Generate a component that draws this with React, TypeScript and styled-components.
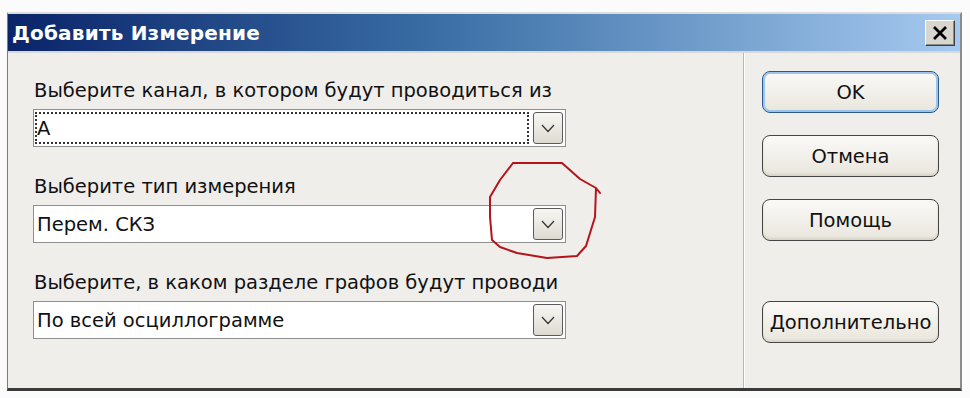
import React from "react";
import styled, {createGlobalStyle} from "styled-components";

const GlobalStyle = createGlobalStyle`
    html, body {
        margin: 0;
        padding: 0;
        background: #fbfbfb;
        font-family: "DejaVu Sans", "Liberation Sans", sans-serif;
    }
`;

const Page = styled.div`
    width: 970px;
    height: 398px;
    padding: 12px 8px 0 7px;
    box-sizing: border-box;
`;

const Window = styled.div`
    position: relative;
    width: 955px;
    height: 379px;
    box-sizing: border-box;
    display: flex;
    flex-direction: column;
    background: #efeeea;
    border-top: 2px solid #dcdcdc;
    border-left: 1px solid #7a7a7a;
    border-right: 2px solid #8a8a8a;
    border-bottom: 3px solid #3a3a3a;
`;

const TitleBar = styled.div`
    height: 37px;
    display: flex;
    align-items: center;
    justify-content: space-between;
    padding: 0 5px 0 4px;
    background: linear-gradient(to right, #0a246a 0%, #3a6ea5 45%, #a6caf0 100%);
    border-bottom: 2px solid #d8d8d8;
`;

const Title = styled.span`
    color: #ffffff;
    font-weight: bold;
    font-size: 20px;
    letter-spacing: 0.2px;
`;

const CloseButton = styled.div`
    width: 30px;
    height: 26px;
    box-sizing: border-box;
    display: flex;
    align-items: center;
    justify-content: center;
    background: #d9d6cf;
    border: 1px solid;
    border-color: #ffffff #404040 #404040 #ffffff;
    box-shadow: inset -1px -1px 0 #888;
`;

const Body = styled.div`
    flex: 1;
    display: flex;
`;

const LeftPane = styled.div`
    width: 735px;
    padding: 26px 0 0 25px;
    box-sizing: border-box;
    display: flex;
    flex-direction: column;
`;

const Field = styled.div`
    display: flex;
    flex-direction: column;
    margin-bottom: 28px;
`;

const Label = styled.div`
    font-size: 19.5px;
    line-height: 24px;
    height: 24px;
    color: #111;
    padding-left: 1px;
    margin-bottom: 6px;
    white-space: nowrap;
`;

const Combo = styled.div`
    width: 533px;
    height: 38px;
    box-sizing: border-box;
    display: flex;
    align-items: center;
    gap: 4px;
    padding: 2px 2px 2px 1px;
    background: #ffffff;
    border: 1px solid #8f8f8f;
`;

const ComboText = styled.div<{ $focused?: boolean }>`
    flex: 1;
    align-self: stretch;
    display: flex;
    align-items: center;
    font-size: 19.5px;
    color: #111;
    border: 2px dotted ${p => (p.$focused ? "#333" : "transparent")};
`;

const DropButton = styled.div`
    width: 30px;
    height: 32px;
    box-sizing: border-box;
    display: flex;
    align-items: center;
    justify-content: center;
    border: 1px solid #5a5a5a;
    border-radius: 3px;
    background: linear-gradient(to bottom, #f7f6f2, #dedbd2);
`;

const RightPane = styled.div`
    flex: 1;
    border-left: 1px solid #b8b8b8;
    box-shadow: inset 1px 0 0 #fff;
    padding: 18px 0 0 18px;
    display: flex;
    flex-direction: column;
    gap: 22px;
`;

const Button = styled.div<{ $default?: boolean; $spaced?: boolean }>`
    width: 177px;
    height: 42px;
    box-sizing: border-box;
    display: flex;
    align-items: center;
    justify-content: center;
    font-size: 19.5px;
    color: #111;
    border-radius: 8px;
    border: 1px solid ${p => (p.$default ? "#2c5a8a" : "#444")};
    background: linear-gradient(to bottom, #fbfaf7, #e9e6dd);
    box-shadow: ${p => (p.$default ? "inset 0 0 0 2px #9cc4ec" : "inset 0 -2px 2px #d8d4c8")};
    margin-top: ${p => (p.$spaced ? "38px" : "0")};
`;

// annotation drawn over the dialog; viewBox kept in page coordinates
const Marker = styled.svg`
    position: absolute;
    left: 467px;
    top: 131px;
    pointer-events: none;
`;

const Chevron = () => (
    <svg width="14" height="9" viewBox="0 0 14 9">
        <path d="M1 1 L7 7.5 L13 1" fill="none" stroke="#333" strokeWidth="1.2"/>
    </svg>
);

const CloseIcon = () => (
    <svg width="16" height="14" viewBox="0 0 16 14">
        <path d="M2 1 L14 13 M14 1 L2 13" stroke="#000" strokeWidth="2.8"/>
    </svg>
);

const fields = [
    {label: "Выберите канал, в котором будут проводиться из", value: "А", focused: true},
    {label: "Выберите тип измерения", value: "Перем. СКЗ"},
    {label: "Выберите, в каком разделе графов будут проводи", value: "По всей осциллограмме"},
];

const App = () => {
    return (
        <Page>
            <GlobalStyle/>
            <Window>
                <TitleBar>
                    <Title>Добавить Измерение</Title>
                    <CloseButton><CloseIcon/></CloseButton>
                </TitleBar>
                <Body>
                    <LeftPane>
                        {fields.map(f => (
                            <Field key={f.label}>
                                <Label>{f.label}</Label>
                                <Combo>
                                    <ComboText $focused={f.focused}>{f.value}</ComboText>
                                    <DropButton><Chevron/></DropButton>
                                </Combo>
                            </Field>
                        ))}
                    </LeftPane>
                    <RightPane>
                        <Button $default>OK</Button>
                        <Button>Отмена</Button>
                        <Button>Помощь</Button>
                        <Button $spaced>Дополнительно</Button>
                    </RightPane>
                </Body>
                <Marker width="140" height="120" viewBox="475 145 140 120">
                    <path
                        d="M513 163 L562 163 L580 179 L596 188 L600 193 M596 188 L595 217 L586 246 L577 256 L547 258 L517 253 L500 247 L492 240 L490 217 L490 197 L500 180 L513 163"
                        fill="none" stroke="#b5141a" strokeWidth="2" strokeLinejoin="round" strokeLinecap="round"/>
                </Marker>
            </Window>
        </Page>
    );
};

export default App;
